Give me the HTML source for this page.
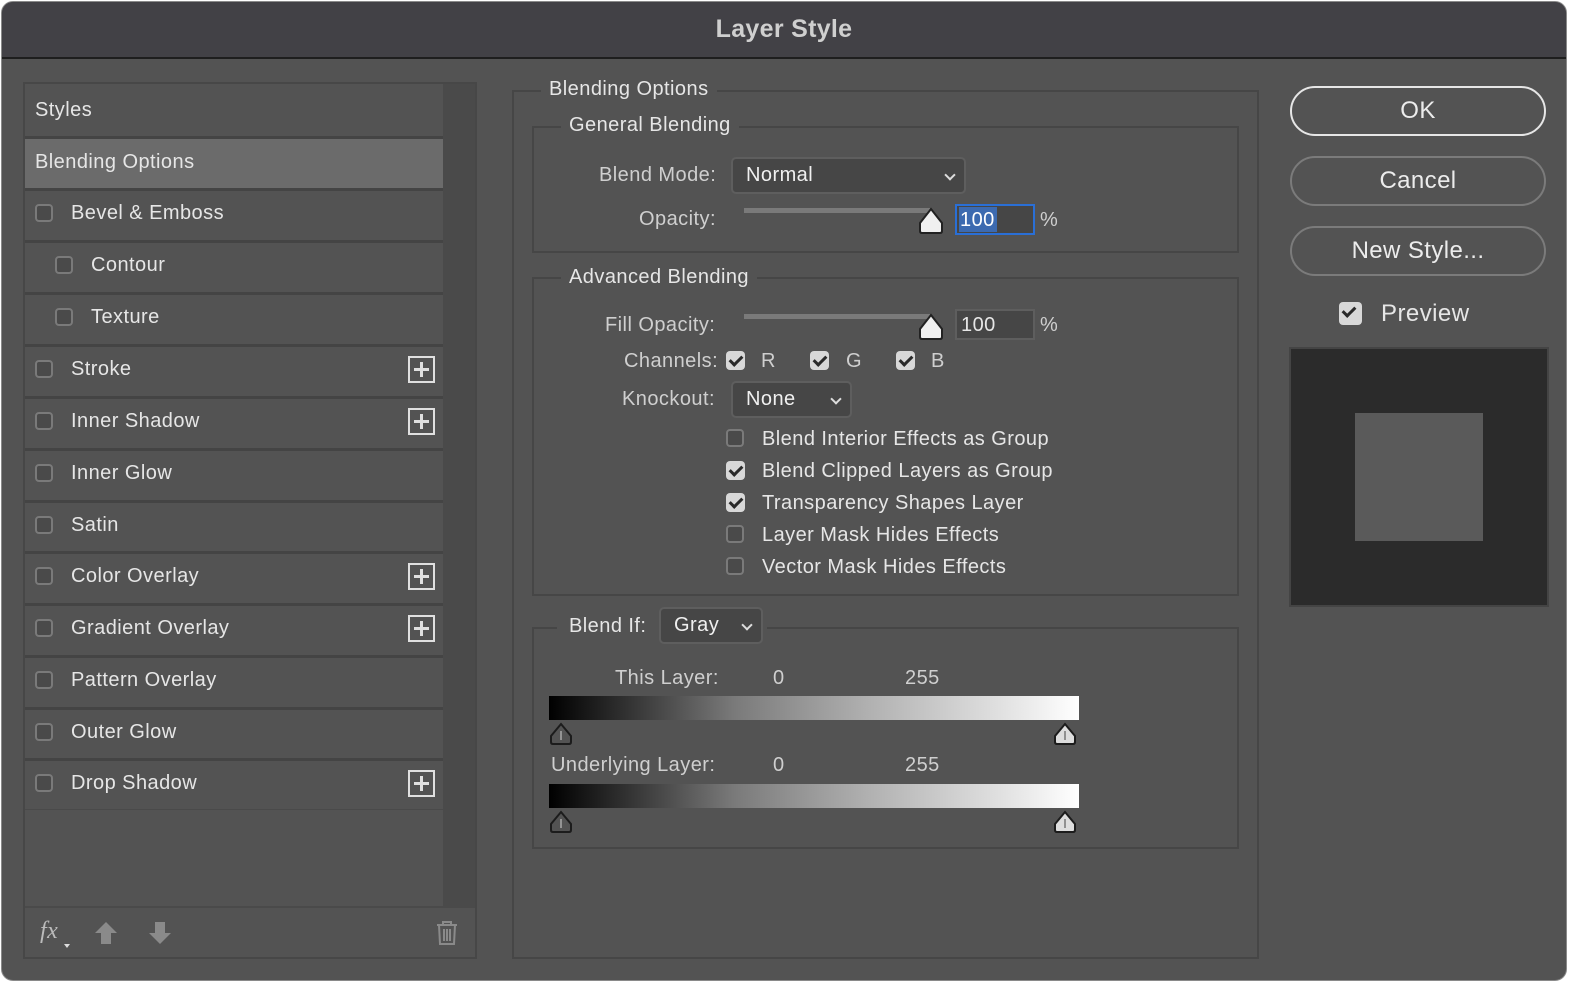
<!DOCTYPE html>
<html><head><meta charset="utf-8"><style>
*{margin:0;padding:0;box-sizing:border-box}
body{width:1574px;height:986px;background:#fff;font-family:"Liberation Sans",Arial,sans-serif;overflow:hidden;position:relative}
.win{position:absolute;left:1px;top:1px;width:1566px;height:980px;background:#535353;border-radius:12px;overflow:hidden;border:1px solid #8a8a8a}
.title{position:absolute;left:0;top:0;width:100%;height:57px;background:#424146;border-bottom:2px solid #1e1e1e;color:#cfcfcf;font-size:25px;font-weight:bold;text-align:center;line-height:54px;letter-spacing:0.3px}
.a{position:absolute}
.t{position:absolute;color:#e6e6e6;font-size:20px;white-space:nowrap;line-height:24px;letter-spacing:0.45px}
.l{color:#cfcfcf}
.cb{position:absolute;width:18px;height:18px;border:2px solid #7a7a7a;border-radius:4px;background:#4a4a4a}
.cc{position:absolute;width:19px;height:19px;border-radius:4px;background:#d8d8d8}
.cc::after{content:"";position:absolute;left:6px;top:2px;width:5px;height:10px;border:solid #2a2a2a;border-width:0 3px 3px 0;transform:rotate(45deg)}
.sep{position:absolute;left:25px;width:418px;height:3px;background:#444}
.plus{position:absolute;left:408px;width:27px;height:27px;border:2px solid #e0e0e0}
.plus::before{content:"";position:absolute;left:4px;top:10px;width:15px;height:3px;background:#e0e0e0}
.plus::after{content:"";position:absolute;left:10px;top:4px;width:3px;height:15px;background:#e0e0e0}
.box{position:absolute;border:2px solid #464646}
.leg{position:absolute;background:#535353;padding:0 8px;color:#e6e6e6;font-size:20px;line-height:24px;letter-spacing:0.45px}
.dd{position:absolute;border:2px solid #5e5e5e;background:#464646;border-radius:5px}
.dd span{position:absolute;left:13px;top:5px;color:#f0f0f0;font-size:20px;letter-spacing:0.45px}
.dd i{position:absolute;right:10px;top:12px;width:8px;height:8px;border:solid #ddd;border-width:0 2px 2px 0;transform:rotate(45deg)}
.btn{position:absolute;left:1290px;width:256px;height:50px;border:2px solid #7b7b7b;border-radius:25px;color:#ececec;font-size:24px;text-align:center;line-height:46px;letter-spacing:0.4px}
.grad{position:absolute;left:549px;width:530px;height:24px;background:linear-gradient(to right,#000 0%,#333 15%,#7a7a7a 35%,#b0b0b0 60%,#e0e0e0 85%,#fff 100%)}
</style></head><body>
<div class="win">
<div class="title">Layer Style</div>
</div>
<div class="a" style="left:23px;top:82px;width:454px;height:877px;border:2px solid #474747;background:#535353"></div>
<div class="a" style="left:443px;top:84px;width:32px;height:822px;background:#4a4a4a"></div>
<div class="a" style="left:25px;top:139px;width:418px;height:49px;background:#6b6b6b"></div>
<div class="t" style="left:35px;top:98px">Styles</div>
<div class="t" style="left:35px;top:150px">Blending Options</div>
<div class="sep" style="top:136px"></div>
<div class="sep" style="top:188px"></div>
<div class="sep" style="top:240px"></div>
<div class="sep" style="top:292px"></div>
<div class="sep" style="top:344px"></div>
<div class="sep" style="top:396px"></div>
<div class="sep" style="top:448px"></div>
<div class="sep" style="top:500px"></div>
<div class="sep" style="top:551px"></div>
<div class="sep" style="top:603px"></div>
<div class="sep" style="top:655px"></div>
<div class="sep" style="top:707px"></div>
<div class="sep" style="top:758px"></div>
<div class="a" style="left:25px;top:809px;width:418px;height:1px;background:#4a4a4a"></div>
<div class="a" style="left:25px;top:906px;width:450px;height:2px;background:#4a4a4a"></div>

<div class="cb" style="left:35px;top:204px"></div><div class="t" style="left:71px;top:201px">Bevel &amp; Emboss</div>
<div class="cb" style="left:55px;top:256px"></div><div class="t" style="left:91px;top:253px">Contour</div>
<div class="cb" style="left:55px;top:308px"></div><div class="t" style="left:91px;top:305px">Texture</div>
<div class="cb" style="left:35px;top:360px"></div><div class="t" style="left:71px;top:357px">Stroke</div><div class="plus" style="top:356px"></div>
<div class="cb" style="left:35px;top:412px"></div><div class="t" style="left:71px;top:409px">Inner Shadow</div><div class="plus" style="top:408px"></div>
<div class="cb" style="left:35px;top:464px"></div><div class="t" style="left:71px;top:461px">Inner Glow</div>
<div class="cb" style="left:35px;top:516px"></div><div class="t" style="left:71px;top:513px">Satin</div>
<div class="cb" style="left:35px;top:567px"></div><div class="t" style="left:71px;top:564px">Color Overlay</div><div class="plus" style="top:563px"></div>
<div class="cb" style="left:35px;top:619px"></div><div class="t" style="left:71px;top:616px">Gradient Overlay</div><div class="plus" style="top:615px"></div>
<div class="cb" style="left:35px;top:671px"></div><div class="t" style="left:71px;top:668px">Pattern Overlay</div>
<div class="cb" style="left:35px;top:723px"></div><div class="t" style="left:71px;top:720px">Outer Glow</div>
<div class="cb" style="left:35px;top:774px"></div><div class="t" style="left:71px;top:771px">Drop Shadow</div><div class="plus" style="top:770px"></div>
<div class="t" style="left:40px;top:919px;font-style:italic;color:#bbb;font-size:24px;font-family:'Liberation Serif',serif">fx</div>
<div class="a" style="left:64px;top:944px;width:0;height:0;border:3px solid transparent;border-top:4px solid #ddd"></div>
<svg class="a" style="left:93px;top:920px" width="26" height="26"><path d="M13 2 L24 13 L18 13 L18 24 L8 24 L8 13 L2 13Z" fill="#8a8a8a"/></svg>
<svg class="a" style="left:147px;top:920px" width="26" height="26"><path d="M13 24 L24 13 L18 13 L18 2 L8 2 L8 13 L2 13Z" fill="#8a8a8a"/></svg>
<svg class="a" style="left:435px;top:920px" width="24" height="26" fill="none" stroke="#8a8a8a" stroke-width="2"><path d="M2 5H22M8 5V2H16V5M4 5L5 24H19L20 5M9 9V21M12 9V21M15 9V21"/></svg>

<div class="box" style="left:512px;top:90px;width:747px;height:869px"></div>
<div class="leg" style="left:541px;top:77px">Blending Options</div>
<div class="box" style="left:532px;top:126px;width:707px;height:127px"></div>
<div class="leg" style="left:561px;top:113px">General Blending</div>
<div class="t l" style="left:599px;top:163px">Blend Mode:</div>
<div class="dd" style="left:731px;top:157px;width:235px;height:37px"><span>Normal</span><i></i></div>
<div class="t l" style="left:639px;top:207px">Opacity:</div>
<div class="a" style="left:744px;top:208px;width:186px;height:5px;background:#7a7a7a"></div>
<svg class="a" style="left:918px;top:207px" width="26" height="28"><path d="M13 2 L24 16 V24 Q24 26 22 26 H4 Q2 26 2 24 V16Z" fill="#f0f0f0" stroke="#222" stroke-width="2"/></svg>
<div class="a" style="left:955px;top:204px;width:80px;height:31px;border:2px solid #2a6fd6;background:#464646"></div>
<div class="a" style="left:959px;top:207px;width:38px;height:25px;background:#3c6ab0"></div>
<div class="t" style="left:960px;top:208px;color:#fff">100</div>
<div class="t l" style="left:1040px;top:208px">%</div>

<div class="box" style="left:532px;top:277px;width:707px;height:319px"></div>
<div class="leg" style="left:561px;top:265px">Advanced Blending</div>
<div class="t l" style="left:605px;top:313px">Fill Opacity:</div>
<div class="a" style="left:744px;top:314px;width:186px;height:5px;background:#7a7a7a"></div>
<svg class="a" style="left:918px;top:313px" width="26" height="28"><path d="M13 2 L24 16 V24 Q24 26 22 26 H4 Q2 26 2 24 V16Z" fill="#f0f0f0" stroke="#222" stroke-width="2"/></svg>
<div class="a" style="left:955px;top:309px;width:80px;height:31px;border:2px solid #5e5e5e;background:#464646"></div>
<div class="t" style="left:961px;top:313px">100</div>
<div class="t l" style="left:1040px;top:313px">%</div>
<div class="t l" style="left:624px;top:349px">Channels:</div>
<div class="cc" style="left:726px;top:351px"></div><div class="t l" style="left:761px;top:349px">R</div>
<div class="cc" style="left:810px;top:351px"></div><div class="t l" style="left:846px;top:349px">G</div>
<div class="cc" style="left:896px;top:351px"></div><div class="t l" style="left:931px;top:349px">B</div>
<div class="t l" style="left:622px;top:387px">Knockout:</div>
<div class="dd" style="left:731px;top:381px;width:121px;height:37px"><span>None</span><i></i></div>
<div class="cb" style="left:726px;top:429px"></div><div class="t" style="left:762px;top:427px">Blend Interior Effects as Group</div>
<div class="cc" style="left:726px;top:461px"></div><div class="t" style="left:762px;top:459px">Blend Clipped Layers as Group</div>
<div class="cc" style="left:726px;top:493px"></div><div class="t" style="left:762px;top:491px">Transparency Shapes Layer</div>
<div class="cb" style="left:726px;top:525px"></div><div class="t" style="left:762px;top:523px">Layer Mask Hides Effects</div>
<div class="cb" style="left:726px;top:557px"></div><div class="t" style="left:762px;top:555px">Vector Mask Hides Effects</div>

<div class="box" style="left:532px;top:627px;width:707px;height:222px"></div>
<div class="a" style="left:557px;top:610px;width:210px;height:36px;background:#535353"></div>
<div class="t" style="left:569px;top:614px">Blend If:</div>
<div class="dd" style="left:659px;top:607px;width:104px;height:37px"><span>Gray</span><i></i></div>
<div class="t l" style="left:615px;top:666px">This Layer:</div>
<div class="t l" style="left:773px;top:666px">0</div>
<div class="t l" style="left:905px;top:666px">255</div>
<div class="grad" style="top:696px"></div>
<svg class="a" style="left:548px;top:722px" width="26" height="24"><path d="M13 2 L23 14 V20 Q23 22 21 22 H5 Q3 22 3 20 V14Z" fill="none" stroke="#1c1c1c" stroke-width="2"/><path d="M13 9V18" stroke="#aaa" stroke-width="1.5"/></svg>
<svg class="a" style="left:1052px;top:722px" width="26" height="24"><path d="M13 2 L23 14 V20 Q23 22 21 22 H5 Q3 22 3 20 V14Z" fill="#ddd" stroke="#1c1c1c" stroke-width="2"/><path d="M13 9V18" stroke="#777" stroke-width="1.5"/></svg>
<div class="t l" style="left:551px;top:753px">Underlying Layer:</div>
<div class="t l" style="left:773px;top:753px">0</div>
<div class="t l" style="left:905px;top:753px">255</div>
<div class="grad" style="top:784px"></div>
<svg class="a" style="left:548px;top:810px" width="26" height="24"><path d="M13 2 L23 14 V20 Q23 22 21 22 H5 Q3 22 3 20 V14Z" fill="none" stroke="#1c1c1c" stroke-width="2"/><path d="M13 9V18" stroke="#aaa" stroke-width="1.5"/></svg>
<svg class="a" style="left:1052px;top:810px" width="26" height="24"><path d="M13 2 L23 14 V20 Q23 22 21 22 H5 Q3 22 3 20 V14Z" fill="#ddd" stroke="#1c1c1c" stroke-width="2"/><path d="M13 9V18" stroke="#777" stroke-width="1.5"/></svg>

<div class="btn" style="top:86px;border-color:#e6e6e6">OK</div>
<div class="btn" style="top:156px">Cancel</div>
<div class="btn" style="top:226px">New Style...</div>
<div class="cc" style="left:1339px;top:302px;width:23px;height:23px"></div>
<div class="t" style="left:1381px;top:300px;font-size:24px;line-height:28px">Preview</div>
<div class="a" style="left:1289px;top:347px;width:260px;height:260px;background:#2b2b2b;border:2px solid #444"></div>
<div class="a" style="left:1355px;top:413px;width:128px;height:128px;background:#5a5a5a"></div>
</body></html>
